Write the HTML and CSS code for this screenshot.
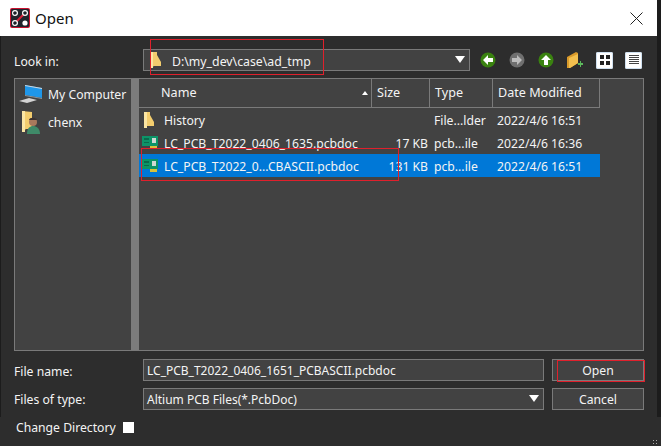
FILE: index.html
```html
<!DOCTYPE html>
<html lang="en">
<head>
    <meta charset="UTF-8">
    <title>Open</title>
    <link rel="stylesheet" href="styles.css">
</head>
<body>
    <div class="window">
        <div class="titlebar">
            <svg class="app-icon" width="20" height="20" viewBox="0 0 20 20">
                <rect width="20" height="20" rx="2" fill="#c8102e"/>
                <rect x="1" y="1" width="18" height="18" rx="1" fill="#20242c"/>
                <path d="M4 16 16 4" stroke="#d8203a" stroke-width="2"/>
                <circle cx="5" cy="5" r="2.4" fill="#1c2028" stroke="#fff" stroke-width="1.2"/>
                <circle cx="15" cy="5" r="2.4" fill="#1c2028" stroke="#fff" stroke-width="1.2"/>
                <circle cx="5" cy="15" r="2.4" fill="#1c2028" stroke="#fff" stroke-width="1.2"/>
                <circle cx="15" cy="15" r="2.6" fill="#fff"/>
            </svg>
            <div class="title-text">Open</div>
            <svg class="close-icon" width="13" height="13" viewBox="0 0 13 13">
                <path d="M.5.5l12 12M12.5.5l-12 12" stroke="#222" stroke-width="1"/>
            </svg>
        </div>

        <div class="content">
            <div class="look-row">
                <div class="field-label">Look in:</div>
                <div class="combo look-combo">
                    <svg class="folder" width="12" height="16" viewBox="0 0 12 16">
                        <path d="M0 0h7v3l4 7v4H4l-4 2z" fill="#f3cd6e"/>
                        <path d="M0 0h3v16H0z" fill="#fbe6a4"/>
                    </svg>
                    <span class="combo-text">D:\my_dev\case\ad_tmp</span>
                    <span class="combo-arrow"></span>
                </div>
                <div class="tools">
                    <svg width="16" height="16" viewBox="0 0 16 16"><circle cx="8" cy="8" r="7.5" fill="#3a8210"/><path d="M3 8l5-5v3h5v4H8v3z" fill="#fff"/></svg>
                    <svg width="16" height="16" viewBox="0 0 16 16"><circle cx="8" cy="8" r="7.5" fill="#6f6f6f"/><path d="M13 8L8 3v3H3v4h5v3z" fill="#bdbdbd"/></svg>
                    <svg width="16" height="16" viewBox="0 0 16 16"><circle cx="8" cy="8" r="7.5" fill="#3a8210"/><path d="M8 3l5 5h-3v5H6V8H3z" fill="#fff"/></svg>
                    <svg width="16" height="18" viewBox="0 0 16 18"><path d="M0 6l9-5 2 1v10l-8 5H0z" fill="#d99a2b"/><path d="M2 7l9-4v9l-8 5H2z" fill="#f3c04f"/><path d="M11 12h2v-2h1v2h2v2h-2v2h-1v-2h-2z" fill="#5cb85c"/></svg>
                    <span class="view-btn">
                        <svg width="10" height="10" viewBox="0 0 10 10"><path d="M0 0h4v4H0zM6 0h4v4H6zM0 6h4v4H0zM6 6h4v4H6z" fill="#222"/></svg>
                    </span>
                    <span class="view-btn">
                        <svg width="10" height="10" viewBox="0 0 10 10"><path d="M0 0h10v1H0zM0 2h10v1H0zM0 4h10v1H0zM0 6h10v1H0zM0 8h10v1H0z" fill="#444"/></svg>
                    </span>
                </div>
            </div>

            <div class="browser">
                <div class="sidebar">
                    <div class="side-item">
                        <svg width="24" height="20" viewBox="0 0 24 20"><path d="M6 1l17 3v10L6 11z" fill="#1f97ea"/><path d="M6 1l17 3v1L6 2z" fill="#cfd6dc"/><path d="M6 11l17 3v1L6 12z" fill="#8a949c"/><path d="M0 17l10-3 8 2-10 3z" fill="#d4d4d4"/></svg>
                        <span>My Computer</span>
                    </div>
                    <div class="side-item">
                        <svg width="24" height="23" viewBox="0 0 24 23"><path d="M3 0l10 1v17H7l-4 3z" fill="#f3cd6e"/><path d="M3 0h3v21H3z" fill="#fbe6a4"/><circle cx="14" cy="11" r="4" fill="#a8795c"/><path d="M10 9c0-3 8-3 8 0z" fill="#3c3230"/><path d="M8 23c0-6 3-8 6-8s7 2 7 8z" fill="#3f8a68"/></svg>
                        <span>chenx</span>
                    </div>
                </div>
                <div class="splitter"></div>
                <div class="files">
                    <div class="file-head">
                        <div class="col-name">Name<span class="sort-arrow"></span></div>
                        <div class="col-size">Size</div>
                        <div class="col-type">Type</div>
                        <div class="col-date">Date Modified</div>
                    </div>
                    <div class="file-row">
                        <div class="col-name">
                            <svg class="row-icon" width="16" height="16" viewBox="0 0 16 16"><path d="M2 0h6v3l4 7v4H5l-3 2z" fill="#f3cd6e"/><path d="M2 0h3v16H2z" fill="#fbe6a4"/></svg>
                            <span>History</span>
                        </div>
                        <div class="col-size"></div>
                        <div class="col-type">File...lder</div>
                        <div class="col-date">2022/4/6 16:51</div>
                    </div>
                    <div class="file-row">
                        <div class="col-name">
                            <svg class="row-icon" width="16" height="13" viewBox="0 0 16 13"><path d="M0 0h16v10H0z" fill="#0c9468"/><path d="M2 2h5v2H2zM2 6h5v1H2z" fill="#0a6a4c"/><path d="M10 2h4v5h-4z" fill="#cfd8d2"/><path d="M8 10h7v3H8z" fill="#d8c23a"/></svg>
                            <span>LC_PCB_T2022_0406_1635.pcbdoc</span>
                        </div>
                        <div class="col-size">17 KB</div>
                        <div class="col-type">pcb...ile</div>
                        <div class="col-date">2022/4/6 16:36</div>
                    </div>
                    <div class="file-row selected">
                        <div class="col-name">
                            <svg class="row-icon" width="16" height="13" viewBox="0 0 16 13"><path d="M0 0h16v10H0z" fill="#0c9468"/><path d="M2 2h5v2H2zM2 6h5v1H2z" fill="#0a6a4c"/><path d="M10 2h4v5h-4z" fill="#cfd8d2"/><path d="M8 10h7v3H8z" fill="#d8c23a"/></svg>
                            <span>LC_PCB_T2022_0...CBASCII.pcbdoc</span>
                        </div>
                        <div class="col-size">131 KB</div>
                        <div class="col-type">pcb...ile</div>
                        <div class="col-date">2022/4/6 16:51</div>
                    </div>
                </div>
            </div>

            <div class="form-grid">
                <div class="field-label">File name:</div>
                <div class="combo input-text">LC_PCB_T2022_0406_1651_PCBASCII.pcbdoc</div>
                <div class="button">Open</div>
                <div class="field-label type-label">Files of type:</div>
                <div class="combo input-text">Altium PCB Files(*.PcbDoc)<span class="combo-arrow"></span></div>
                <div class="button">Cancel</div>
            </div>
        </div>

        <div class="change-dir">
            <span>Change Directory</span>
            <span class="check"></span>
        </div>

        <!-- red marks drawn over the screenshot -->
        <div class="mark mark-path"></div>
        <div class="mark mark-file"></div>
        <div class="mark mark-open"></div>
        <div class="grip"></div>
    </div>
</body>
</html>
```

FILE: styles.css
```css
* {
    box-sizing: border-box;
}

body {
    margin: 0;
    width: 661px;
    height: 446px;
    overflow: hidden;
    background: #2d2d2d;
    font-family: "Noto Sans", "Open Sans", sans-serif;
    font-size: 12.2px;
    color: #f4f4f4;
}

.window {
    position: relative;
    height: 446px;
    background: linear-gradient(#1c1c1c 417px, #2d2d2d 417px);
}

.titlebar {
    display: flex;
    align-items: center;
    height: 36px;
    margin-right: 4px;
    padding: 0 14px 0 10px;
    background: #fff;
}

.app-icon {
    flex: none;
}

.title-text {
    flex: 1;
    margin-left: 5px;
    font-size: 15px;
    color: #111;
}

.content {
    height: 381px;
    margin: 0 4px 0 1px;
    padding: 13px 13px 0 13px;
    background: #2d2d2d;
}

.look-row {
    display: flex;
    align-items: center;
    height: 22px;
    white-space: nowrap;
}

.field-label {
    width: 129px;
    flex: none;
    padding-top: 2px;
    white-space: nowrap;
}

.type-label {
    padding-top: 0;
}

.combo {
    position: relative;
    height: 22px;
    border: 1px solid #7a7a7a;
    background: #424242;
}

.look-combo {
    display: flex;
    align-items: center;
    width: 327px;
    flex: none;
    padding-left: 6px;
}

.combo-text {
    margin-left: 10px;
    padding-top: 2px;
    font-size: 12.3px;
}

.combo-arrow {
    position: absolute;
    right: 4px;
    top: 6px;
    border-left: 5px solid transparent;
    border-right: 5px solid transparent;
    border-top: 7px solid #fff;
}

.tools {
    display: flex;
    align-items: center;
    gap: 13px;
    margin-left: 10px;
}

.view-btn {
    display: flex;
    align-items: center;
    justify-content: center;
    width: 17px;
    height: 17px;
    background: #fff;
    border-radius: 2px;
    box-shadow: inset 0 0 0 1px #cfe0f0;
}

.view-btn + .view-btn {
    margin-left: -1px;
}

.browser {
    display: flex;
    height: 273px;
    margin-top: 7px;
    border: 1px solid #7a7a7a;
    background: #424242;
    white-space: nowrap;
}

.sidebar {
    width: 116px;
    flex: none;
    padding-top: 1px;
}

.side-item {
    display: flex;
    align-items: center;
    gap: 5px;
    height: 28px;
    padding-left: 4px;
}

.splitter {
    width: 8px;
    flex: none;
    background: #7c7c7c;
}

.files {
    flex: 1;
}

.file-head {
    display: flex;
    height: 29px;
    width: 461px;
    font-size: 12.6px;
    line-height: 28px;
    border-bottom: 1px solid #7a7a7a;
}

.file-head > div {
    border-right: 1px solid #7a7a7a;
    padding-left: 5px;
}

.file-head .col-name {
    position: relative;
    padding-left: 22px;
}

.sort-arrow {
    position: absolute;
    right: 3px;
    top: 12px;
    border-left: 3px solid transparent;
    border-right: 3px solid transparent;
    border-bottom: 4px solid #fff;
}

.col-name {
    width: 233px;
    flex: none;
}

.col-size {
    width: 58px;
    flex: none;
}

.col-type {
    width: 63px;
    flex: none;
}

.col-date {
    width: 107px;
    flex: none;
}

.file-row {
    display: flex;
    align-items: center;
    height: 23px;
    width: 461px;
}

.file-row.selected {
    background: #0078d7;
}

.file-row .col-name {
    display: flex;
    align-items: center;
    gap: 6px;
    padding-left: 3px;
}

.file-row .col-name span,
.file-row .col-size,
.file-row .col-type,
.file-row .col-date {
    padding-top: 2px;
}

.file-row .col-size {
    padding-right: 2px;
    text-align: right;
}

.file-row .col-type,
.file-row .col-date {
    padding-left: 4px;
}

.row-icon {
    flex: none;
}

.form-grid {
    display: grid;
    grid-template-columns: 129px 401px 100px;
    grid-template-rows: 22px 22px;
    row-gap: 7px;
    margin-top: 8px;
    align-items: center;
}

.input-text {
    padding-left: 3px;
    font-size: 12px;
    line-height: 22px;
    white-space: nowrap;
}

.button {
    height: 22px;
    margin-left: 8px;
    border: 1px solid #7a7a7a;
    background: #424242;
    text-align: center;
    line-height: 22px;
}

.change-dir {
    display: flex;
    align-items: center;
    gap: 7px;
    height: 20px;
    padding-left: 16px;
}

.check {
    width: 11px;
    height: 11px;
    background: #fff;
}

.mark {
    position: absolute;
    border: 1px solid #e0202c;
}

.mark-path {
    left: 150px;
    top: 39px;
    width: 174px;
    height: 36px;
}

.mark-file {
    left: 141px;
    top: 148px;
    width: 258px;
    height: 33px;
}

.mark-open {
    left: 557px;
    top: 360px;
    width: 88px;
    height: 22px;
}

.grip {
    position: absolute;
    right: 3px;
    bottom: 1px;
    width: 6px;
    height: 6px;
    background: radial-gradient(circle, #aaa 0 1px, transparent 1px) 0 0 / 3px 3px;
}
```
